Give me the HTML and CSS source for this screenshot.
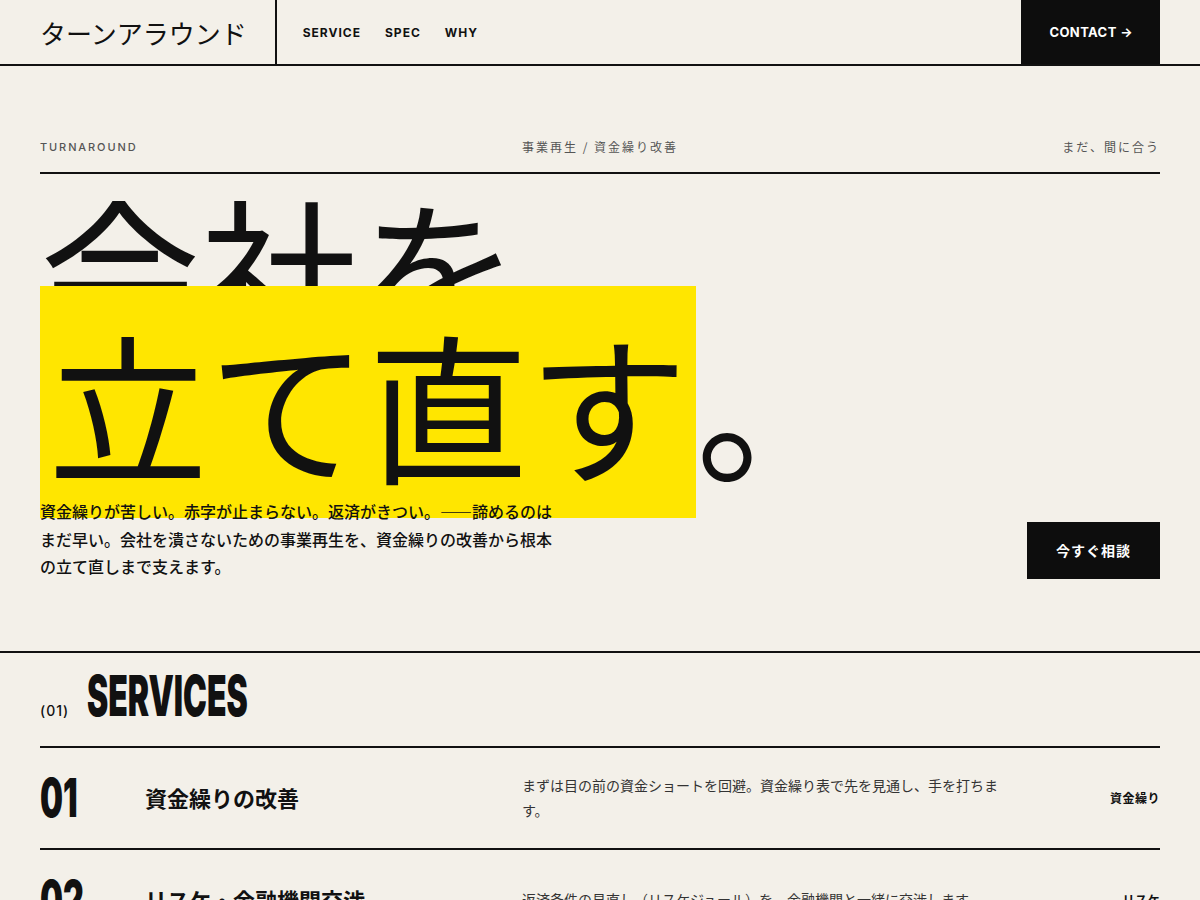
FILE: index.html
```html
<!DOCTYPE html>
<html lang="ja">
<head>
<meta charset="utf-8">
<title>ターンアラウンド</title>
<link rel="stylesheet" href="styles.css">
</head>
<body>
<header class="site-header">
  <div class="logo">ターンアラウンド</div>
  <nav class="nav">
    <a href="#service">SERVICE</a>
    <a href="#spec">SPEC</a>
    <a href="#why">WHY</a>
  </nav>
  <a class="contact" href="#contact">CONTACT →</a>
</header>
<main>
  <section class="hero">
    <div class="hero-meta">
      <span class="meta-en">TURNAROUND</span>
      <span class="meta-center">事業再生 / 資金繰り改善</span>
      <span class="meta-right">まだ、間に合う</span>
    </div>
    <h1 class="hero-title">会社を<br><span class="mark">立て直す</span>。</h1>
    <div class="hero-foot">
      <p class="lead">資金繰りが苦しい。赤字が止まらない。返済がきつい。――諦めるのはまだ早い。会社を潰さないための事業再生を、資金繰りの改善から根本の立て直しまで支えます。</p>
      <a class="cta" href="#contact">今すぐ相談</a>
    </div>
  </section>
  <section class="services" id="service">
    <div class="section-head">
      <span class="section-num">(01)</span>
      <h2 class="section-title">SERVICES</h2>
    </div>
    <ul class="service-list">
      <li class="service">
        <span class="service-no">01</span>
        <h3 class="service-name">資金繰りの改善</h3>
        <p class="service-desc">まずは目の前の資金ショートを回避。資金繰り表で先を見通し、手を打ちます。</p>
        <span class="service-tag">資金繰り</span>
      </li>
      <li class="service">
        <span class="service-no">02</span>
        <h3 class="service-name">リスケ・金融機関交渉</h3>
        <p class="service-desc">返済条件の見直し（リスケジュール）を、金融機関と一緒に交渉します。</p>
        <span class="service-tag">リスケ</span>
      </li>
      <li class="service">
        <span class="service-no">03</span>
        <h3 class="service-name">事業の立て直し</h3>
        <p class="service-desc">赤字の原因を突き止め、利益の出る事業構造へ根本から見直します。</p>
        <span class="service-tag">事業再生</span>
      </li>
    </ul>
  </section>
</main>
</body>
</html>
```

FILE: styles.css
```css
* { box-sizing: border-box; }

body {
  margin: 0;
  background: #f3f0e9;
  color: #111;
  font-family: "Noto Sans CJK JP", "Noto Sans", sans-serif;
}

a { color: inherit; text-decoration: none; }

/* header */
.site-header {
  display: flex;
  align-items: stretch;
  height: 66px;
  border-bottom: 2px solid #111;
  padding-right: 40px;
}

.logo {
  display: flex;
  align-items: center;
  padding: 0 28px 0 40px;
  border-right: 2px solid #111;
  font-size: 26px;
  font-weight: 400;
}

.nav {
  flex: 1;
  display: flex;
  align-items: center;
  gap: 24px;
  padding-left: 26px;
}

.nav a {
  font-family: Inter, "Liberation Sans", sans-serif;
  font-weight: 700;
  font-size: 12px;
  letter-spacing: 1px;
}

.contact {
  display: flex;
  align-items: center;
  padding: 0 27px 0 28px;
  background: #0d0d0d;
  color: #fff;
  font-family: Inter, "Liberation Sans", sans-serif;
  font-weight: 700;
  font-size: 13px;
  letter-spacing: 0.4px;
}

/* hero */
.hero {
  padding: 71px 40px 70px;
}

.hero-meta {
  display: grid;
  grid-template-columns: 1fr auto 1fr;
  align-items: center;
  line-height: 20px;
  padding-bottom: 15px;
  border-bottom: 2px solid #111;
  color: #555;
}

.meta-en {
  font-family: Inter, "Liberation Sans", sans-serif;
  font-size: 11px;
  font-weight: 500;
  letter-spacing: 1.9px;
}

.meta-center,
.meta-right {
  font-size: 12px;
  letter-spacing: 2px;
}

.meta-right { justify-self: end; }

.hero-title {
  margin: 24px 0 0;
  font-size: 160px;
  line-height: 136px;
  font-weight: 400;
}

.mark {
  background: #ffe600;
  padding: 0 8px;
}

.hero-foot {
  display: flex;
  justify-content: space-between;
  align-items: flex-end;
  margin-top: 28px;
}

.lead {
  margin: 0;
  max-width: 520px;
  font-size: 16px;
  line-height: 27.5px;
  font-weight: 500;
  color: #111;
}

.cta {
  margin-bottom: 2px;
  padding: 18px 29px;
  background: #0d0d0d;
  color: #fff;
  font-size: 14px;
  line-height: 21px;
  font-weight: 700;
  letter-spacing: 1px;
}

/* services */
.services {
  border-top: 2px solid #111;
  padding: 0 40px;
}

.section-head {
  display: flex;
  align-items: baseline;
  gap: 18px;
  padding: 15px 0 22px;
  border-bottom: 2px solid #111;
}

.section-num {
  font-family: Inter, "Liberation Sans", sans-serif;
  font-size: 14px;
  font-weight: 500;
  letter-spacing: 1px;
}

.section-title {
  margin: 0;
  font-family: Inter, "Liberation Sans", sans-serif;
  font-size: 56px;
  line-height: 1;
  font-weight: 900;
  transform: scaleX(0.57);
  transform-origin: left center;
}

.service-list {
  list-style: none;
  margin: 0;
  padding: 0;
}

.service {
  display: grid;
  grid-template-columns: 105px 377px 480px 1fr;
  align-items: center;
  padding: 23px 0;
  border-bottom: 2px solid #111;
}

.service-no {
  display: block;
  font-family: Inter, "Liberation Sans", sans-serif;
  font-size: 54px;
  line-height: 1;
  font-weight: 900;
  transform: scaleX(0.6);
  transform-origin: left center;
}

.service-name {
  margin: 0;
  font-size: 22px;
  line-height: 1.4;
  font-weight: 700;
}

.service-desc {
  margin: 0;
  font-size: 14px;
  line-height: 25px;
  color: #333;
}

.service-tag {
  justify-self: end;
  font-size: 12px;
  font-weight: 700;
  letter-spacing: 0.5px;
}
```
